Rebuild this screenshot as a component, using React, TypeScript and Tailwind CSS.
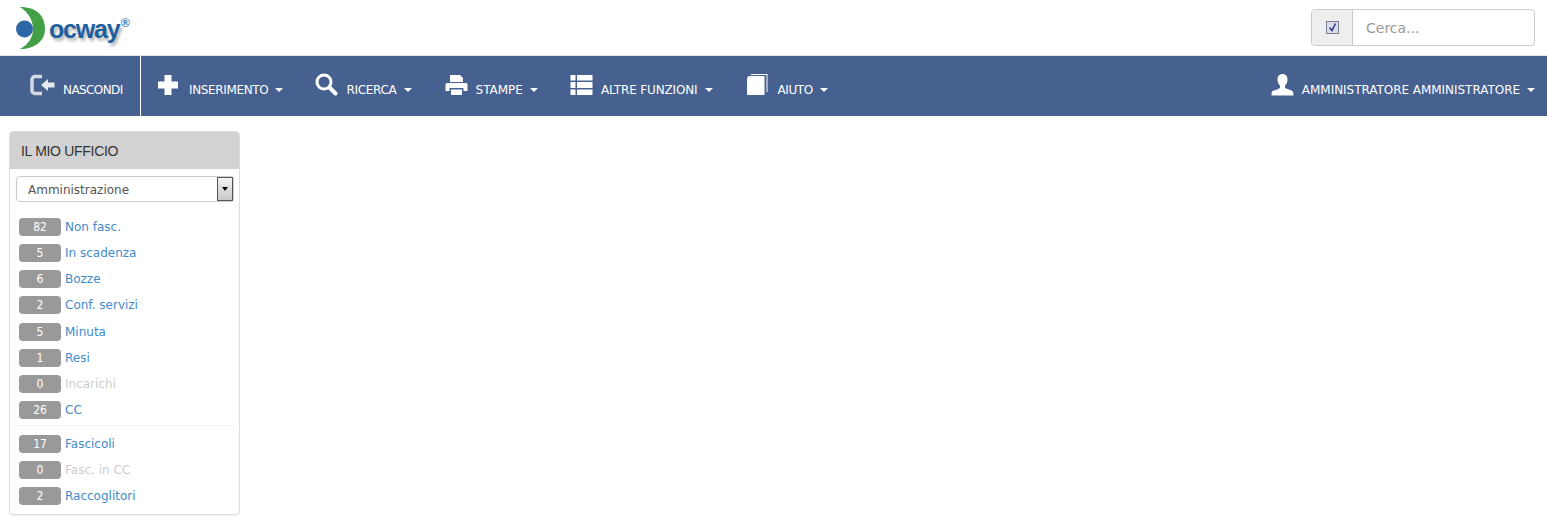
const font = "[font-family:Tahoma,'DejaVu_Sans',sans-serif]";

function Caret() {
    return <span className="ml-[7px] mt-[7px] inline-block w-0 h-0 border-x-[4px] border-x-transparent border-t-[4px] border-t-white"></span>;
}

function Logo() {
    return (
        <div className="relative w-[130px] h-[55px] ml-[15px]">
            <svg className="absolute left-0 top-[6px]" width="40" height="44" viewBox="0 0 40 44">
                <circle cx="9.500" cy="23" r="8.500" fill="#2b66a5" />
                <path d="M5 1 C22 1 30 10 30 23 C30 35 20 43 5 43 C14 38 18 31 18 23 C18 15 14 7 5 1 Z" fill="#43a047" />
            </svg>
            <span className="absolute left-[34px] top-[16px] text-[25px] leading-[26px] font-bold text-[#1f5f9e] [font-family:'Liberation_Sans',sans-serif] tracking-[-1.2px] [text-shadow:2px_3px_3px_#b5b5b5]">ocway</span>
            <span className="absolute left-[106px] top-[16px] text-[12px] leading-[14px] font-bold text-[#3c78b5] [font-family:'Liberation_Sans',sans-serif]">®</span>
        </div>
    );
}

function NavItem({ icon, label, cls, ml = 'ml-[32px]' }: { icon: React.ReactNode, label: string, cls: string, ml?: string }) {
    return (
        <div className={`flex items-center ${ml}`}>
            <div className="mt-[-3px]">{icon}</div>
            <span className={`text-[12px] text-white mt-[8px] whitespace-nowrap ${cls}`}>{label}</span>
            <Caret />
        </div>
    );
}

const PlusIcon = <svg width="22" height="22" viewBox="0 0 22 22" fill="white"><path d="M7.500 1h7v6.500H21v7h-6.500V21h-7v-6.500H1v-7h6.500z" /></svg>;
const SearchIcon = <svg width="23" height="23" viewBox="0 0 23 23" fill="none" stroke="white"><circle cx="9" cy="9" r="7" strokeWidth="3" /><path d="M14.500 14.500l6 6" strokeWidth="4" strokeLinecap="round" /></svg>;
const PrintIcon = <svg width="23" height="22" viewBox="0 0 23 22" fill="white"><path d="M5 1h10l3 3v4H5z" /><path d="M2 9h19a1.500 1.500 0 0 1 1.500 1.500V17h-4v-3H4.500v3H.5v-6.500A1.500 1.500 0 0 1 2 9z" /><path d="M6 15.500h11V21H6z" /></svg>;
const ListIcon = <svg width="23" height="22" viewBox="0 0 23 22" fill="white"><path d="M.5 1h5v5.500h-5zM7 1h15.500v5.500H7zM.5 8h5v6h-5zM7 8h15.500v6H7zM.5 15.500h5V21h-5zM7 15.500h15.500V21H7z" /></svg>;
const BookIcon = <svg width="21" height="23" viewBox="0 0 21 23" fill="white"><path d="M4 1h16.500v18H19.500V2H4z" /><path d="M3 3h14.500v19H1a1 1 0 0 1-1-1V6a3 3 0 0 1 3-3z" /></svg>;
const UserIcon = <svg width="23" height="22" viewBox="0 0 23 22" fill="white"><path d="M11.500 0c3.300 0 5 2.300 5 5.500 0 2.500-1 5-2.500 6.200v1.800c0 1 5 2 7.300 3.500.9.600 1.200 1.800 1.200 4.500H.5c0-2.700.3-3.900 1.200-4.500C4 16 9 15 9 13.500v-1.800C7.500 10.500 6.500 8 6.500 5.500c0-3.200 1.700-5.500 5-5.500z" /></svg>;
const HideIcon = <svg width="25" height="22" viewBox="0 0 25 22"><path d="M12 2.500H5A3 3 0 0 0 2 5.500v11A3 3 0 0 0 5 19.500h7" fill="none" stroke="#d5dbe5" strokeWidth="3.500" /><path d="M11 11l7-6v3.500h6.500v5H18V17z" fill="#e6e9ee" /></svg>;

const groupOne = [
    { n: 82, label: 'Non fasc.' },
    { n: 5, label: 'In scadenza' },
    { n: 6, label: 'Bozze' },
    { n: 2, label: 'Conf. servizi' },
    { n: 5, label: 'Minuta' },
    { n: 1, label: 'Resi' },
    { n: 0, label: 'Incarichi' },
    { n: 26, label: 'CC' },
];

const groupTwo = [
    { n: 17, label: 'Fascicoli' },
    { n: 0, label: 'Fasc. in CC' },
    { n: 2, label: 'Raccoglitori' },
];

function Row({ n, label }: { n: number, label: string }) {
    return (
        <div className="flex items-center h-[26.2px] pl-[3px]">
            <span className="flex justify-center items-center w-[42px] h-[18px] rounded-[4px] bg-[#999999] text-white text-[12px] [font-family:'DejaVu_Sans_Condensed','DejaVu_Sans',sans-serif]">{n}</span>
            <a className={`ml-[4px] text-[12px] ${n === 0 ? 'text-[#cccccc]' : 'text-[#428bca]'}`}>{label}</a>
        </div>
    );
}

export default function App() {
    return (
        <div className={`w-[1547px] h-[526px] overflow-hidden bg-white ${font}`}>
            <header className="flex justify-between items-start h-[56px] border-b border-[#e7e7e7]">
                <Logo />
                <div className="flex mt-[9px] mr-[12px] w-[224px] h-[37px] rounded-[4px] border border-[#cccccc] overflow-hidden">
                    <div className="flex justify-center items-center w-[41px] bg-[#eeeeee] border-r border-[#cccccc]">
                        <svg width="13" height="13" viewBox="0 0 13 13">
                            <rect x="0.500" y="0.500" width="12" height="12" fill="#d8dde8" stroke="#7a8090" />
                            <path d="M3.500 6.500l2.500 3 3.500-7" fill="none" stroke="#2b3f8c" strokeWidth="1.600" />
                        </svg>
                    </div>
                    <span className="pl-[13px] pt-[2px] flex items-center text-[14px] text-[#999999]">Cerca...</span>
                </div>
            </header>
            <nav className="flex justify-between items-center h-[60px] bg-[#46608f]">
                <div className="flex items-center h-full">
                    <div className="flex items-center h-full w-[141px] border-r border-white pl-[30px]">
                        <div className="mt-[-3px]">{HideIcon}</div>
                        <span className="text-[12px] text-white ml-[8px] mt-[8px] tracking-[-0.6px]">NASCONDI</span>
                    </div>
                    <div className="flex items-center ml-[16px]">
                        <NavItem icon={PlusIcon} label="INSERIMENTO" ml="ml-0" cls="ml-[10px] tracking-[-0.35px]" />
                        <NavItem icon={SearchIcon} label="RICERCA" cls="ml-[8px] tracking-[-0.3px]" />
                        <NavItem icon={PrintIcon} label="STAMPE" ml="ml-[33px]" cls="ml-[8px]" />
                        <NavItem icon={ListIcon} label="ALTRE FUNZIONI" cls="ml-[8px] tracking-[-0.15px]" />
                        <NavItem icon={BookIcon} label="AIUTO" ml="ml-[34px]" cls="ml-[10px] tracking-[-0.4px]" />
                    </div>
                </div>
                <div className="mr-[12px]">
                    <NavItem icon={UserIcon} label="AMMINISTRATORE AMMINISTRATORE" ml="ml-0" cls="ml-[8px] tracking-[-0.04px]" />
                </div>
            </nav>
            <aside className="mt-[15px] ml-[9px] w-[231px] h-[384px] rounded-[4px] border border-[#dddddd] shadow-[0_1px_1px_rgba(0,0,0,0.05)] overflow-hidden">
                <div className="flex items-center h-[37px] pt-[2px] px-[11px] bg-[#d2d2d2] text-[14px] tracking-[-0.3px] text-[#333333] [font-family:'Liberation_Sans',sans-serif]">IL MIO UFFICIO</div>
                <div className="pl-[6px] pr-[5px] pt-[7px]">
                    <div className="flex justify-between items-center h-[26px] pl-[11px] rounded-[4px] border border-[#cccccc] text-[12px] text-[#555555]">
                        <span className="pt-[2px]">Amministrazione</span>
                        <span className="flex justify-center items-center w-[16px] h-[24px] border border-[#555555] bg-gradient-to-b from-[#f4f4f4] to-[#c8c8c8]">
                            <span className="w-0 h-0 border-x-[3px] border-x-transparent border-t-[4px] border-t-black"></span>
                        </span>
                    </div>
                    <div className="mt-[11.8px]">
                        {groupOne.map((r) => <Row key={r.label} n={r.n} label={r.label} />)}
                    </div>
                    <div className="mt-[2.2px] mb-[4px] border-t border-[#eeeeee]"></div>
                    <div>
                        {groupTwo.map((r) => <Row key={r.label} n={r.n} label={r.label} />)}
                    </div>
                </div>
            </aside>
        </div>
    );
}
